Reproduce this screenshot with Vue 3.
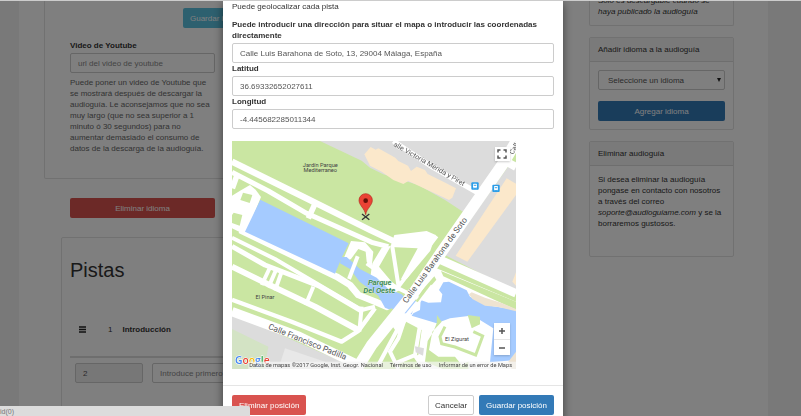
<script setup>
import { ref } from 'vue'

const address = ref('Calle Luis Barahona de Soto, 13, 29004 Málaga, España')
const latitude = ref('36.69332652027611')
const longitude = ref('-4.445682285011344')
</script>

<template>
  <div class="page">
    <div class="container">
      <main class="content">
        <section class="panel language">
          <div class="row-end"><button type="button" class="btn info">Guardar idioma</button></div>
          <div class="field">
            <label for="video">Video de Youtube</label>
            <input id="video" class="control" type="text" placeholder="url del video de youtube">
            <p class="help">Puede poner un video de Youtube que se mostrará después de descargar la audioguía. Le aconsejamos que no sea muy largo (que no sea superior a 1 minuto ó 30 segundos) para no aumentar demasiado el consumo de datos de la descarga de la audioguía.</p>
          </div>
        </section>
        <div class="remove"><button type="button" class="btn danger">Eliminar idioma</button></div>
        <section class="panel tracks">
          <h1>Pistas</h1>
          <div class="track">
            <svg class="handle" viewBox="0 0 7 7" aria-hidden="true"><path d="M0 1h7M0 3.5h7M0 6h7" stroke="#222" stroke-width="1.4" /></svg>
            <span>1</span>
            <strong>Introducción</strong>
          </div>
          <div class="new-track">
            <input class="control" type="text" value="2" readonly aria-label="Número de pista">
            <input class="control" type="text" placeholder="Introduce primero el título" aria-label="Título de pista">
          </div>
        </section>
      </main>
      <aside class="side">
        <section class="panel card first"><div class="card-body"><em>Solo es descargable cuando se haya publicado la audioguía</em></div></section>
        <section class="panel card">
          <h2>Añadir idioma a la audioguía</h2>
          <div class="card-body form">
            <div class="select">
              <select class="control" aria-label="Idioma"><option>Seleccione un idioma</option></select>
              <svg viewBox="0 0 4 4" aria-hidden="true"><path d="M0 0H4L2 4Z" fill="#222" /></svg>
            </div>
            <button type="button" class="btn primary">Agregar idioma</button>
          </div>
        </section>
        <section class="panel card">
          <h2>Eliminar audioguía</h2>
          <div class="card-body contact">Si desea eliminar la audioguía pongase en contacto con nosotros a través del correo <em>soporte@audioguiame.com</em> y se la borraremos gustosos.</div>
        </section>
      </aside>
    </div>
  </div>

  <div class="backdrop">
    <div class="modal" role="dialog" aria-modal="true" aria-label="Geolocalizar pista">
      <div class="modal-body">
        <p>Puede geolocalizar cada pista</p>
        <label for="address">Puede introducir una dirección para situar el mapa o introducir las coordenadas directamente</label>
        <input id="address" v-model="address" class="control" type="text">
        <label for="lat">Latitud</label>
        <input id="lat" v-model="latitude" class="control" type="text">
        <label for="lng">Longitud</label>
        <input id="lng" v-model="longitude" class="control" type="text">

        <div class="map">
          <svg viewBox="21 18 852 684" aria-label="Mapa">
            <rect x="21" y="18" width="852" height="684" fill="#cae6a2" />
            <!-- urban blocks -->
            <path d="M285 18L410 77L435 98L475 118L580 150L660 195L716 232L873 20V18Z" fill="#dcdcdc" />
            <path d="M860 80L660 360L873 470V80Z" fill="#dcdcdc" />
            <path d="M21 535L400 702H21Z" fill="#dcdcdc" />
            <path d="M21 582L130 635L118 702H21Z" fill="#d3e3c4" />
            <path d="M180 640L300 680L330 702H160Z" fill="#e8e8e8" />
            <path d="M418 58L437 36L452 44L460 40L511 68L520 78L549 92L558 108L575 95L600 105L608 117L655 140L693 160L682 188L672 195L640 180L550 138L535 147L505 135L470 110L435 92Z" fill="#fbe8cb" />
            <path d="M845 130L873 146V180L727 380L692 362Z" fill="#fbe8cb" />
            <path d="M873 412L862 440L873 452Z" fill="#fbe8cb" />

            <!-- paved surroundings -->
            <g fill="#fff">
              <path d="M21 182L44 168L75 150L92 164L108 186L62 300L21 280Z" />
              <path d="M508 300L605 288L632 300L616 347L545 432L528 432L578 340L496 336Z" />
              <path d="M470 338L498 332L462 395L500 440L530 462L500 478L436 425L442 385Z" />
              <path d="M635 400L873 500V702H590L500 570L560 480Z" />
              <path d="M378 318L420 322L445 350L440 395L425 380L422 350L400 342L378 372L350 385Z" />
            </g>
            <g fill="#cae6a2">
              <path d="M54 173L82 180L74 204L46 195Z" />
              <path d="M26 233L52 240L44 272L21 264V240Z" />
              <path d="M38 130L52 136L44 160L30 158Z" />
              <path d="M648 408L873 500V524L655 424Z" />
              <path d="M628 424L634 434L560 520L549 514Z" />
            </g>
            <!-- footpaths -->
            <g fill="none" stroke="#fff" stroke-linejoin="round">
              <path d="M21 80L240 188L435 285L505 318" stroke-width="19" />
              <path d="M21 112L130 168L245 235L440 322L490 335" stroke-width="15" />
              <path d="M272 202L250 250M38 115L22 160" stroke-width="17" />
              <path d="M45 285L180 350L335 425L375 450L400 480L450 500L520 530" stroke-width="20" />
              <path d="M21 308L150 372L410 525L450 515" stroke-width="12" />
              <path d="M21 334L120 390L280 452L410 528" stroke-width="15" />
              <path d="M21 395L130 448L270 515L400 585" stroke-width="18" />
              <path d="M21 494L200 560L350 620L400 588L450 520" stroke-width="13" />
              <path d="M137 393L110 450M153 405L130 458M169 413L150 467M265 455L242 510M410 515L403 590" stroke-width="12" />
              <path d="M502 335L520 450M635 303L518 458" stroke-width="12" />
              <path d="M500 450L600 500M425 385L460 410" stroke-width="12" />
            </g>
            <!-- water -->
            <g fill="#a5cbff">
              <path d="M106 194L371 325L350 368L330 416L60 290Z" />
              <path d="M348 366L365 366L405 402L455 428L490 462L530 478L546 495L575 497L560 538L510 530L480 518L460 482L404 440L375 402L345 385Z" />
              <path d="M655 442L672 440L725 466L735 485L795 512L873 524V675L795 682L805 580L765 555L730 543L675 550L635 565L560 542L565 535L585 525L587 495L610 503L648 502L652 478L642 465Z" />
            </g>
            <path d="M732 478L740 472L780 488L830 504L873 522V529L820 516L780 512L742 492Z" fill="#eee3d1" />
            <path d="M873 650L850 680L860 702H873Z" fill="#eee3d1" />
            <path d="M398 364L372 432" stroke="#fff" stroke-width="12" />

            <!-- gardens beside the lake -->
            <path d="M635 565L636 540L650 560L622 590L612 645L640 665L690 665L710 690L730 680L730 705H660L600 680L608 618L625 590Z" fill="#cae6a2" />
            <path d="M728 540L765 545V568L740 580Z" fill="#cae6a2" />
            <path d="M675 552L775 595L748 672L700 660L640 650L620 628Z" fill="#fff" />
            <path d="M745 590L773 603L752 660L690 636L650 626L645 605L660 575" fill="none" stroke="#cae6a2" stroke-width="9" />
            <path d="M543 560L590 585L580 660L545 665L505 635Z" fill="#cae6a2" />
            <path d="M435 550L500 520L515 533L450 620Z" fill="#cae6a2" />
            <path d="M405 650L470 600L500 660L545 702H390Z" fill="#cae6a2" />
            <path d="M540 550L520 610L495 650L520 702M585 570L570 660L510 685" fill="none" stroke="#fff" stroke-width="12" />
            <path d="M570 634L597 640L594 662L572 652Z" fill="#dcdcdc" />

            <!-- streets -->
            <g fill="none" stroke="#fff">
              <path d="M21 530L220 603L400 690" stroke-width="28" />
              <path d="M873 20L835 85L645 358L565 475L440 630L395 702" stroke-width="34" />
              <path d="M505 18L620 95L770 180" stroke-width="15" />
              <path d="M830 72L873 96" stroke-width="24" />
              <path d="M640 372L873 475" stroke-width="25" />
              <path d="M620 450L530 560L460 690" stroke-width="12" />
            </g>
            <path d="M628 430L575 500" fill="none" stroke="#cae6a2" stroke-width="7" />

            <!-- place and street names -->
            <g class="place">
              <text x="286" y="95">Jardín Parque</text>
              <text x="286" y="112">Mediterraneo</text>
              <text x="120" y="493">El Pinar</text>
              <text x="696" y="618">El Zigurat</text>
            </g>
            <g class="park">
              <text x="464" y="450">Parque</text>
              <text x="463" y="474">Del Oeste</text>
            </g>
            <g class="street">
              <text transform="translate(504 32) rotate(30)">alle Victoria Mérida y Piret</text>
              <text class="wide" transform="translate(545 506) rotate(-54)">Calle Luis Barahona de Soto</text>
              <text class="wide" transform="translate(128 581) rotate(22)">Calle Francisco Padilla</text>
              <text transform="translate(864 60) rotate(-60)">Calle</text>
            </g>

            <!-- bus stops -->
            <g v-for="stop in [{ x: 750, y: 153 }, { x: 813, y: 160 }]" :key="stop.x" :transform="`translate(${stop.x} ${stop.y})`">
              <rect x="-11" y="-11" width="22" height="22" rx="3" fill="#2a9de8" />
              <rect x="-6" y="-7" width="12" height="12" rx="2" fill="#fff" />
              <path d="M-4 -4H4V0H-4ZM-5 7H-2M2 7H5" fill="#2a9de8" stroke="#fff" stroke-width="1" />
            </g>

            <!-- marker -->
            <path d="M411 237L433 254M433 237L411 254" stroke="#333" stroke-width="4" />
            <path d="M422 239C419 220 402 211 402 196A20 20 0 0 1 442 196C442 211 425 220 422 239Z" fill="#ea4335" stroke="#b3291f" stroke-width="2" />
            <circle cx="422" cy="197" r="7" fill="#641009" />

            <!-- attribution -->
            <text class="google" x="30" y="687"><tspan fill="#4285f4">G</tspan><tspan fill="#ea4335">o</tspan><tspan fill="#fbbc05">o</tspan><tspan fill="#4285f4">g</tspan><tspan fill="#34a853">l</tspan><tspan fill="#ea4335">e</tspan></text>
            <rect x="70" y="680" width="803" height="22" fill="#f5f5f5" opacity=".7" />
            <g class="legal">
              <text x="73" y="697">Datos de mapas ©2017 Google, Inst. Geogr. Nacional</text>
              <a href="#terminos"><text x="494" y="697">Términos de uso</text></a>
              <a href="#informar"><text x="641" y="697">Informar de un error de Maps</text></a>
            </g>
          </svg>
          <button type="button" class="fullscreen" aria-label="Pantalla completa">
            <svg viewBox="0 0 14 14"><path d="M3 5.500V3H5.500M8.500 3H11V5.500M11 8.500V11H8.500M5.500 11H3V8.500" fill="none" stroke="#555" stroke-width="1.500" /></svg>
          </button>
          <div class="zoom">
            <button type="button" aria-label="Acercar"><svg viewBox="0 0 8 8"><path d="M1 4H7M4 1V7" stroke="#555" stroke-width="1.500" /></svg></button>
            <button type="button" aria-label="Alejar"><svg viewBox="0 0 8 8"><path d="M1 4H7" stroke="#555" stroke-width="1.500" /></svg></button>
          </div>
        </div>
      </div>
      <div class="modal-footer">
        <button type="button" class="btn danger">Eliminar posición</button>
        <button type="button" class="btn default">Cancelar</button>
        <button type="button" class="btn primary">Guardar posición</button>
      </div>
    </div>
  </div>
  <div class="edge"></div>
  <div class="status">id(0)</div>
</template>

<style>
body {
  margin: 0;
  background: #f3f3f3;
}
</style>

<style scoped>
* {
  box-sizing: border-box;
}
.page,
.backdrop {
  height: 100vh;
  overflow: hidden;
  padding-right: 14px;
  font: 8px/11px "Liberation Sans", Arial, sans-serif;
  color: #333;
}
.container {
  display: flex;
  gap: 27px;
  max-width: 749px;
  margin: 0 auto;
  padding: 0 34px 0 25px;
  background: #fff;
}
.content {
  flex: 1;
}
.side {
  width: 145px;
  display: flex;
  flex-direction: column;
  gap: 11px;
}
.panel {
  border: 1px solid #e2e2e2;
  border-radius: 2px;
}
.language {
  border-top: 0;
  padding: 8px 25px 24px;
}
.row-end {
  display: flex;
  padding-left: 113px;
}
.field {
  width: 145px;
  margin-top: 12px;
}
label {
  display: block;
  margin-bottom: 2px;
  font-weight: bold;
}
.help {
  margin: 4px 0 0;
  color: #666;
  line-height: 11px;
}
.btn {
  height: 20px;
  padding: 0 6px;
  border: 1px solid transparent;
  border-radius: 2px;
  font: inherit;
  color: #fff;
  white-space: nowrap;
}
.info {
  background: #5bc0de;
}
.danger {
  background: #d9534f;
}
.primary {
  background: #337ab7;
}
.default {
  background: #fff;
  border-color: #ccc;
  color: #333;
}
.control {
  display: block;
  width: 100%;
  height: 20px;
  padding: 0 7px;
  border: 1px solid #ccc;
  border-radius: 2px;
  background: #fff;
  font: inherit;
  color: #555;
}
.control::placeholder {
  color: #888;
}
.select {
  position: relative;
}
.select .control {
  appearance: none;
  padding: 0 9px;
}
.select svg {
  position: absolute;
  top: 8px;
  right: 4px;
  width: 4px;
  height: 4px;
  pointer-events: none;
}
.remove {
  width: 171px;
  padding: 19px 0 10px 26px;
}
.remove .btn {
  width: 100%;
}
.tracks {
  margin: 9px 0 0 17px;
  padding: 21px 8px 40px;
  min-height: 180px;
}
h1 {
  margin: 0;
  font-size: 20px;
  font-weight: normal;
  line-height: 22px;
}
.track {
  display: flex;
  align-items: center;
  padding: 43px 9px 21px;
  border-bottom: 2px solid #ddd;
}
.handle {
  width: 7px;
  height: 7px;
}
.track span {
  margin: 0 10px 0 22px;
}
.new-track {
  display: grid;
  grid-template-columns: 68px 1fr;
  gap: 9px;
  padding: 5px;
}
.new-track .control:first-child {
  background: #eee;
}
.card.first {
  border-top: 0;
  margin-top: -7px;
}
h2 {
  margin: 0;
  padding: 6px 8px;
  border-bottom: 1px solid #ddd;
  background: #f5f5f5;
  font-size: 8px;
  font-weight: normal;
  line-height: 11px;
}
.card-body {
  padding: 8px;
}
.card.first .card-body {
  padding-top: 2px;
}
.form {
  display: grid;
  gap: 11px;
}
.contact {
  min-height: 90px;
}
.backdrop {
  position: fixed;
  inset: 0;
  padding-right: 15px;
  background: rgba(0, 0, 0, 0.5);
}
.modal {
  max-width: 340px;
  margin: 0 auto;
  background: #fff;
  box-shadow: 0 3px 9px rgba(0, 0, 0, 0.5);
}
.modal-body {
  padding: 1px 9px 16px;
}
.modal-body p {
  margin: 0 0 7px;
}
.map {
  position: relative;
  max-width: 284px;
  margin-top: 12px;
}
.map > svg {
  display: block;
  width: 100%;
}
.map text {
  font-family: Roboto, sans-serif;
  fill: #555;
}
.place text {
  font-size: 17px;
  text-anchor: middle;
  fill: #444;
}
.park text {
  font-size: 23px;
  font-style: italic;
  font-weight: 500;
  text-anchor: middle;
  fill: #2f8055;
  stroke: #e4f2d0;
  stroke-width: 2px;
  paint-order: stroke;
}
.street text {
  font-size: 21px;
  fill: #555;
  stroke: #fff;
  stroke-width: 2px;
  paint-order: stroke;
}
.street .wide {
  font-size: 25px;
}
.map .google {
  font-family: "Open Sans", sans-serif;
  font-size: 31px;
  font-weight: 600;
  fill: none;
  stroke: #fff;
  stroke-width: 3px;
  paint-order: stroke;
}
.legal text {
  font-size: 17px;
  fill: #444;
}
.fullscreen,
.zoom {
  position: absolute;
  right: 6px;
  background: #fff;
  box-shadow: 0 1px 2px rgba(0, 0, 0, 0.2);
}
.fullscreen {
  top: 6px;
  width: 15px;
  height: 14px;
  padding: 0;
  border: 0;
}
.fullscreen svg {
  display: block;
  width: 14px;
  height: 14px;
}
.zoom {
  bottom: 14px;
  display: grid;
  width: 16px;
}
.zoom button {
  display: grid;
  place-items: center;
  height: 16px;
  padding: 0;
  border: 0;
  background: none;
}
.zoom button + button {
  border-top: 1px solid #e6e6e6;
}
.zoom svg {
  width: 8px;
  height: 8px;
}
.modal-footer {
  display: flex;
  gap: 5px;
  padding: 9px 9px 12px;
  border-top: 1px solid #e5e5e5;
}
.modal-footer .danger {
  margin-right: auto;
}
.edge {
  position: fixed;
  inset: 0 0 auto;
  height: 1px;
  background: #ccc;
}
.status {
  position: fixed;
  left: 0;
  bottom: 0;
  width: 250px;
  height: 10px;
  border-top-right-radius: 2px;
  background: #dcdcdc;
  font: 7px/12px "Liberation Sans", Arial, sans-serif;
  color: #777;
}
</style>
